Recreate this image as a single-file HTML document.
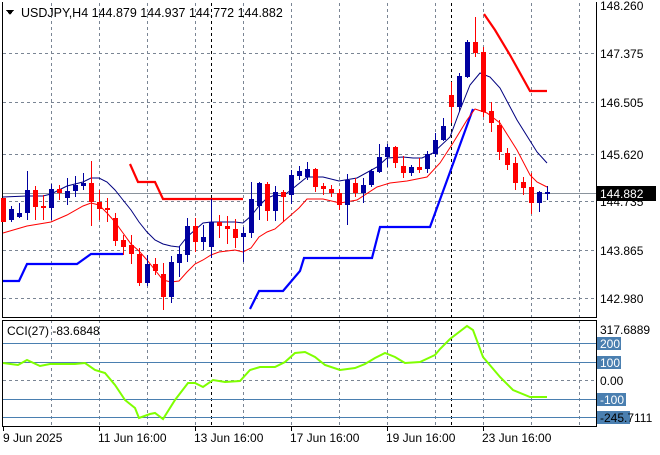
<!DOCTYPE html><html><head><meta charset="utf-8"><style>
body{margin:0;background:#fff;width:660px;height:450px;overflow:hidden}
text{font-family:"Liberation Sans","DejaVu Sans",sans-serif;font-size:12px;fill:#000}
</style></head><body>
<svg width="660" height="450" viewBox="0 0 660 450" xmlns="http://www.w3.org/2000/svg" shape-rendering="crispEdges">
<rect width="660" height="450" fill="#fff"/>
<g stroke="#7a8594" stroke-dasharray="3,3" stroke-width="1">
<path d="M51.5 3V317M99.5 3V317M147.5 3V317M195.5 3V317M243.5 3V317M291.5 3V317M339.5 3V317M387.5 3V317M435.5 3V317M483.5 3V317M531.5 3V317M579.5 3V317"/>
<path d="M51.5 320V426M99.5 320V426M147.5 320V426M195.5 320V426M243.5 320V426M291.5 320V426M339.5 320V426M387.5 320V426M435.5 320V426M483.5 320V426M531.5 320V426M579.5 320V426"/>
<path d="M3 53.5H596M3 102.5H596M3 154.5H596M3 201.5H596M3 250.5H596M3 298.5H596M3 380.5H596"/>
</g>
<g stroke="#000" stroke-dasharray="3,3"><path d="M211.5 3V317M451.5 3V317M211.5 320V426M451.5 320V426"/></g>
<path d="M3 193.5H596" stroke="#8a939c"/>
<g stroke="#4a7fb0"><path d="M3 343.5H596M3 362.5H596M3 399.5H596M3 417.5H596"/></g>
<g fill="none" stroke="#000"><path d="M2.5 2V317.5H596.5V2M2.5 320.5H596.5V426.5H2.5Z"/></g>
<g stroke="#000"><path d="M3.5 427V431M99.5 427V431M195.5 427V431M291.5 427V431M387.5 427V431M483.5 427V431"/></g>
<g shape-rendering="auto" fill="none">
<polyline stroke="#0000ff" stroke-width="2.2" points="3,281 19,281 27,264 77,264 91,254 123,254"/>
<polyline stroke="#0000ff" stroke-width="2.2" points="250,309 259,291 283,291 300,271 304,258 372,258 380,227 430,227 473,109"/>
<polyline stroke="#ff0000" stroke-width="2.2" points="130,164 138,182 155,182 163,199 243,199"/>
<polyline stroke="#ff0000" stroke-width="2.2" points="484,14 495,30 510,55 530,91 547,91"/>
<polyline stroke="#00007f" stroke-width="1" points="3,197 27,196 43,196 51,194 59,190 67,186 83,182 91,178 99,178 107,182 115,190 123,200 131,210 139,222 147,232 155,240 163,244 171,246 179,247 187,237 195,230 203,223 211,222 235,222 243,223 251,216 259,206 267,198 275,195 283,196 291,190 307,177 323,177 339,181 357,178 377,167 387,158 403,157 413,158 422,158 433,153 450,137 460,110 470,85 480,73 490,77 500,88 517,120 537,152 547,163"/>
<polyline stroke="#ff0000" stroke-width="1" points="3,233 27,226 51,222 67,215 83,206 91,203 99,205 107,213 115,222 123,233 131,244 139,251 147,260 155,270 163,280 171,282 179,281 187,272 195,264 203,260 211,255 219,252 235,250 243,252 251,248 259,237 267,232 275,229 283,222 291,215 299,208 307,199 323,199 340,203 357,200 377,187 390,183 407,181 427,177 440,163 453,143 467,120 475,109 487,113 500,123 517,150 530,175 537,182 547,187"/>
<polyline stroke="#7fff00" stroke-width="2" points="3,363 18,365 27,360 40,366 50,364 75,364 85,363 95,370 105,373 115,385 125,400 135,408 139,418 150,414 155,413 163,419 175,400 188,383 195,383 203,387 213,380 225,382 240,381 250,370 260,367 275,367 285,362 295,353 305,352 315,357 325,365 340,370 355,368 365,364 375,358 385,353 395,357 405,363 420,362 435,355 440,349 450,339 467,326 473,330 483,357 500,377 513,390 530,397 547,397"/>
</g>
<g>
<path stroke="#ff0000" d="M3.5 198V222M35.5 186V220M43.5 195V220M59.5 185V200M91.5 161V226M99.5 190V220M107.5 198V222M115.5 213V246M123.5 235V255M131.5 235V264M139.5 248V286M155.5 258V275M163.5 263V310M195.5 218V252M219.5 215V238M227.5 216V244M235.5 219V248M267.5 182V221M283.5 190V222M315.5 168V192M323.5 183V195M331.5 185V197M339.5 189V210M355.5 178V197M395.5 146V168M403.5 156V178M419.5 158V173M451.5 82V123M475.5 17V57M483.5 47V117M491.5 102V132M499.5 120V160M507.5 148V170M515.5 157V190M523.5 177V195M531.5 173V214"/>
<path stroke="#0000a0" d="M11.5 206V222M19.5 203V218M27.5 171V220M51.5 184V220M67.5 178V205M75.5 176V197M83.5 173V190M147.5 255V286M171.5 256V303M179.5 246V277M187.5 218V262M203.5 225V250M211.5 199V258M243.5 227V262M251.5 182V238M259.5 182V220M275.5 186V221M291.5 170V204M299.5 166V180M307.5 162V180M347.5 174V225M363.5 178V203M371.5 169V187M379.5 144V173M387.5 144V167M411.5 165V176M427.5 151V173M435.5 133V157M443.5 118V141M459.5 73V112M467.5 40V78M539.5 191V212M547.5 186V200"/>
<g fill="#ff0000">
<rect x="1" y="198" width="5" height="24"/><rect x="33" y="190" width="5" height="17"/><rect x="41" y="206" width="5" height="2"/><rect x="57" y="189" width="5" height="4"/><rect x="89" y="183" width="5" height="19"/><rect x="97" y="202" width="5" height="7"/><rect x="105" y="208" width="5" height="2"/><rect x="113" y="218" width="5" height="23"/><rect x="121" y="240" width="5" height="7"/><rect x="129" y="245" width="5" height="9"/><rect x="137" y="254" width="5" height="29"/><rect x="153" y="264" width="5" height="7"/><rect x="161" y="274" width="5" height="23"/><rect x="193" y="226" width="5" height="16"/><rect x="217" y="222" width="5" height="4"/><rect x="225" y="226" width="5" height="3"/><rect x="233" y="229" width="5" height="9"/><rect x="265" y="184" width="5" height="27"/><rect x="281" y="192" width="5" height="5"/><rect x="313" y="169" width="5" height="18"/><rect x="321" y="186" width="5" height="3"/><rect x="329" y="189" width="5" height="4"/><rect x="337" y="193" width="5" height="12"/><rect x="353" y="183" width="5" height="10"/><rect x="393" y="147" width="5" height="16"/><rect x="401" y="166" width="5" height="7"/><rect x="417" y="167" width="5" height="3"/><rect x="449" y="95" width="5" height="12"/><rect x="473" y="42" width="5" height="11"/><rect x="481" y="52" width="5" height="60"/><rect x="489" y="111" width="5" height="12"/><rect x="497" y="125" width="5" height="27"/><rect x="505" y="153" width="5" height="12"/><rect x="513" y="163" width="5" height="20"/><rect x="521" y="182" width="5" height="6"/><rect x="529" y="187" width="5" height="16"/>
</g>
<g fill="#0000a0">
<rect x="9" y="209" width="5" height="11"/><rect x="17" y="213" width="5" height="4"/><rect x="25" y="190" width="5" height="23"/><rect x="49" y="189" width="5" height="19"/><rect x="65" y="191" width="5" height="7"/><rect x="73" y="185" width="5" height="6"/><rect x="81" y="183" width="5" height="3"/><rect x="145" y="264" width="5" height="19"/><rect x="169" y="262" width="5" height="35"/><rect x="177" y="254" width="5" height="9"/><rect x="185" y="226" width="5" height="29"/><rect x="201" y="237" width="5" height="5"/><rect x="209" y="222" width="5" height="25"/><rect x="241" y="233" width="5" height="4"/><rect x="249" y="199" width="5" height="34"/><rect x="257" y="183" width="5" height="23"/><rect x="273" y="192" width="5" height="19"/><rect x="289" y="175" width="5" height="20"/><rect x="297" y="171" width="5" height="5"/><rect x="305" y="169" width="5" height="8"/><rect x="345" y="180" width="5" height="25"/><rect x="361" y="185" width="5" height="8"/><rect x="369" y="171" width="5" height="14"/><rect x="377" y="157" width="5" height="15"/><rect x="385" y="147" width="5" height="10"/><rect x="409" y="167" width="5" height="6"/><rect x="425" y="154" width="5" height="15"/><rect x="433" y="140" width="5" height="14"/><rect x="441" y="126" width="5" height="14"/><rect x="457" y="76" width="5" height="31"/><rect x="465" y="42" width="5" height="35"/><rect x="537" y="192" width="5" height="11"/><rect x="545" y="192" width="5" height="2"/>
</g>
</g>
<path d="M6 10h8l-4 5z" fill="#000"/>
<text x="21" y="17" style="font-size:12.5px;fill:#000">USDJPY,H4  144.879 144.937 144.772 144.882</text>
<text x="7" y="335">CCI(27) -83.6848</text>
<g>
<text x="600" y="10">148.260</text><text x="600" y="58">147.375</text><text x="600" y="107">146.505</text><text x="600" y="159">145.620</text><text x="600" y="206">144.735</text><text x="600" y="255">143.865</text><text x="600" y="303">142.980</text>
<rect x="597" y="186" width="59" height="15" fill="#000"/><text x="600" y="198" style="fill:#fff">144.882</text>
<text x="600" y="334">317.6889</text>
<rect x="597" y="337" width="24" height="13" fill="#4a7fb0"/><text x="600" y="348" style="fill:#fff">200</text>
<rect x="597" y="356" width="24" height="13" fill="#4a7fb0"/><text x="600" y="367" style="fill:#fff">100</text>
<text x="600" y="385">0.00</text>
<rect x="597" y="393" width="29" height="13" fill="#4a7fb0"/><text x="600" y="404" style="fill:#fff">-100</text>
<rect x="597" y="411" width="33" height="13" fill="#4a7fb0"/><text x="600" y="422">-245.7111</text>
</g>
<g><text x="3" y="442">9 Jun 2025</text><text x="98" y="442">11 Jun 16:00</text><text x="194" y="442">13 Jun 16:00</text><text x="290" y="442">17 Jun 16:00</text><text x="386" y="442">19 Jun 16:00</text><text x="482" y="442">23 Jun 16:00</text></g>
</svg>
</body></html>
